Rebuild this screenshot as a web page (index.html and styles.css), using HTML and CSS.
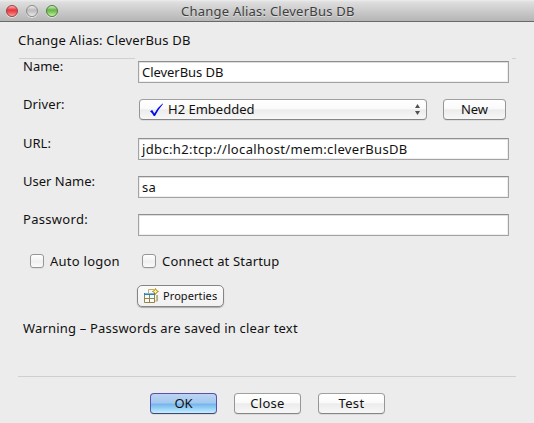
FILE: index.html
```html
<!DOCTYPE html>
<html lang="en">
<head>
<meta charset="utf-8">
<title>Change Alias: CleverBus DB</title>
<link rel="stylesheet" href="styles.css">
</head>
<body>
<div class="window">
  <header class="titlebar">
    <div class="lights"><i class="light red"></i><i class="light gray"></i><i class="light green"></i></div>
    <h1 class="title">Change Alias: CleverBus DB</h1>
  </header>
  <main class="content">
    <h2 class="heading">Change Alias: CleverBus DB</h2>
    <div class="group-line"><span class="line-left"></span><span class="line-right"></span></div>
    <div class="form">
      <div class="row"><span class="label">Name:</span><div class="field"><span class="v-name">CleverBus DB</span></div></div>
      <div class="row driver-row"><span class="label l-driver">Driver:</span>
        <div class="button select">
          <svg class="check" width="14" height="14" viewBox="0 0 14 14"><path d="M0 8.2 2.2 7 4.3 10.4Q7.4 4.8 12.6.6L13 1Q8.4 6.4 5 13H3.8Q2.2 9.8 0 8.2Z" fill="#0008ee"/></svg>
          <span class="v-driver">H2 Embedded</span>
          <svg class="arrows" width="5" height="11" viewBox="0 0 5 11"><path d="M2.5 0 5 4H0zM0 7H5L2.5 11z" fill="#505050"/></svg>
        </div>
        <div class="button new"><span>New</span></div>
      </div>
      <div class="row"><span class="label">URL:</span><div class="field"><span class="v-url">jdbc:h2:tcp://localhost/mem:cleverBusDB</span></div></div>
      <div class="row"><span class="label">User Name:</span><div class="field"><span class="v-user">sa</span></div></div>
      <div class="row"><span class="label l-pass">Password:</span><div class="field"></div></div>
    </div>
    <div class="checks">
      <label class="option auto"><i class="box"></i><span class="t-auto">Auto logon</span></label>
      <label class="option"><i class="box"></i><span class="t-connect">Connect at Startup</span></label>
    </div>
    <div class="properties">
      <svg width="16" height="16" viewBox="0 0 16 16">
        <path d="M4.5 5V1.5H10M13.5 7V13H11" fill="none" stroke="#c6ad60"/>
        <path d="M5 2h5v3H5z" fill="#f5f7f9"/>
        <path d="M12.5 7v6" stroke="#a9bdcc"/>
        <path d="M1 5h10v9H1z" fill="#f3fbff"/>
        <path d="M.5 6v8.5h10V6M5.5 7v7M1 10.5h10" fill="none" stroke="#958447"/>
        <path d="M0 5h11v2H0z" fill="#2f80b8"/><path d="M1 5h9v1H1z" fill="#73b6df"/>
        <path d="m11.5.5 1 2 2 1-2 1-1 2-1-2-2-1 2-1z" fill="#fff1a4" stroke="#b58a0d"/>
      </svg>
      <span>Properties</span>
    </div>
    <p class="warning">Warning – Passwords are saved in clear text</p>
    <footer class="actions">
      <div class="button ok"><span>OK</span></div>
      <div class="button"><span class="t-close">Close</span></div>
      <div class="button"><span class="t-test">Test</span></div>
    </footer>
  </main>
</div>
</body>
</html>
```
FILE: styles.css
```css
* { box-sizing: border-box; }
body { margin: 0; font: 13px/16px "Lucida Grande", "Noto Sans", sans-serif; color: #111; }
.window { width: 534px; height: 423px; background: #ececec; overflow: hidden; }
h1, h2, p { margin: 0; font-size: 13px; font-weight: 400; line-height: 16px; white-space: nowrap; }
span { white-space: nowrap; }
.titlebar { display: grid; grid-template-columns: 181px 1fr; height: 22px; background: linear-gradient(#ededed, #dedede 2px, #b5b5b5 21px); border-bottom: 1px solid #696969; }
.lights { display: flex; gap: 8px; padding: 5px 0 0 6px; }
.light { width: 12px; height: 12px; border-radius: 50%; box-shadow: 0 1px 0 #e2e2e2; }
.red { border: 1px solid #9a4040; background: linear-gradient(#f8b8b8, #e8343b 40%, #f0555a 65%, #ffa29c); }
.gray { border: 1px solid #8b8b8b; background: linear-gradient(#eee, #bcbcbc 40%, #cacaca 65%, #eee); }
.green { border: 1px solid #4d7d3c; background: linear-gradient(#d5efc8, #67b548 40%, #86cc63 65%, #c8f5a5); }
.title { padding-top: 3px; color: #3e3e3e; text-shadow: 0 1px 0 #dedede; letter-spacing: .23px; }
.content { padding: 10px 18px 0 18px; }
.heading { letter-spacing: .19px; }
.group-line { display: flex; justify-content: space-between; margin: 10px 0 0 1px; height: 1px; }
.line-left { width: 116px; background: #d0d0d0; }
.line-right { width: 4px; background: #d0d0d0; }
.form { padding: 2px 0 0 5px; }
.row { display: flex; height: 38px; }
.driver-row { height: 39px; }
.label { width: 115px; margin-top: -3px; flex: none; }
.l-driver { letter-spacing: .1px; }
.l-pass { letter-spacing: .3px; }
.field { width: 371px; height: 22px; background: #fff; border: 1px solid #a3a3a3; border-top-color: #8f8f8f; box-shadow: inset 0 1px 0 #dedede, inset 1px 0 0 #eee, inset -1px 0 0 #eee, inset 0 -1px 0 #eee; padding: 2px 0 0 3px; }
.v-name { letter-spacing: -.05px; }
.v-url { letter-spacing: .36px; }
.v-user { letter-spacing: .3px; }
.button { display: flex; align-items: center; justify-content: center; width: 67px; height: 21px; border: 1px solid #969696; border-top-color: #a0a0a0; border-bottom-color: #858585; border-radius: 4px; background: linear-gradient(#fff, #fafafa 45%, #ececec 52%, #f7f7f7); box-shadow: 0 1px 0 #dcdcdc; }
.button span { margin-top: -1px; }
.select { width: 288px; margin-left: 1px; justify-content: flex-start; padding-left: 10px; }
.select .v-driver { margin-left: 4px; }
.arrows { margin: 0 6px 0 auto; }
.row .new { width: 63px; margin-left: 16px; }
.checks { display: flex; padding: 2px 0 0 12px; }
.option { display: flex; gap: 6px; }
.auto { width: 112px; }
.t-auto { letter-spacing: .25px; }
.t-connect { letter-spacing: .17px; }
.box { width: 14px; height: 14px; border: 1px solid #969696; border-radius: 3px; background: linear-gradient(#fff, #f0f0f0 55%, #fafafa); box-shadow: 0 1px 0 #dedede; }
.option span { margin-top: -1px; }
.properties { display: flex; align-items: center; width: 87px; height: 22px; margin: 16px 0 0 119px; padding-left: 6px; border: 1px solid #858585; border-radius: 5px; background: linear-gradient(#fbfbfb, #f1f1f1); box-shadow: 0 1px 1px #aaa; font-size: 11px; letter-spacing: .08px; }
.properties span { margin-left: 3px; }
.warning { margin: 13px 0 0 5px; letter-spacing: .19px; }
.actions { display: flex; gap: 17px; margin-top: 40px; padding: 16px 0 0 132px; border-top: 1px solid #cfcfcf; }
.t-close { letter-spacing: .3px; }
.t-test { letter-spacing: .3px; }
.ok { border-color: #5a50ad; border-bottom-color: #454473; background: linear-gradient(#bdd4f2, #a1c8f0 47%, #75b5ed 54%, #c1f0ff); }
```
